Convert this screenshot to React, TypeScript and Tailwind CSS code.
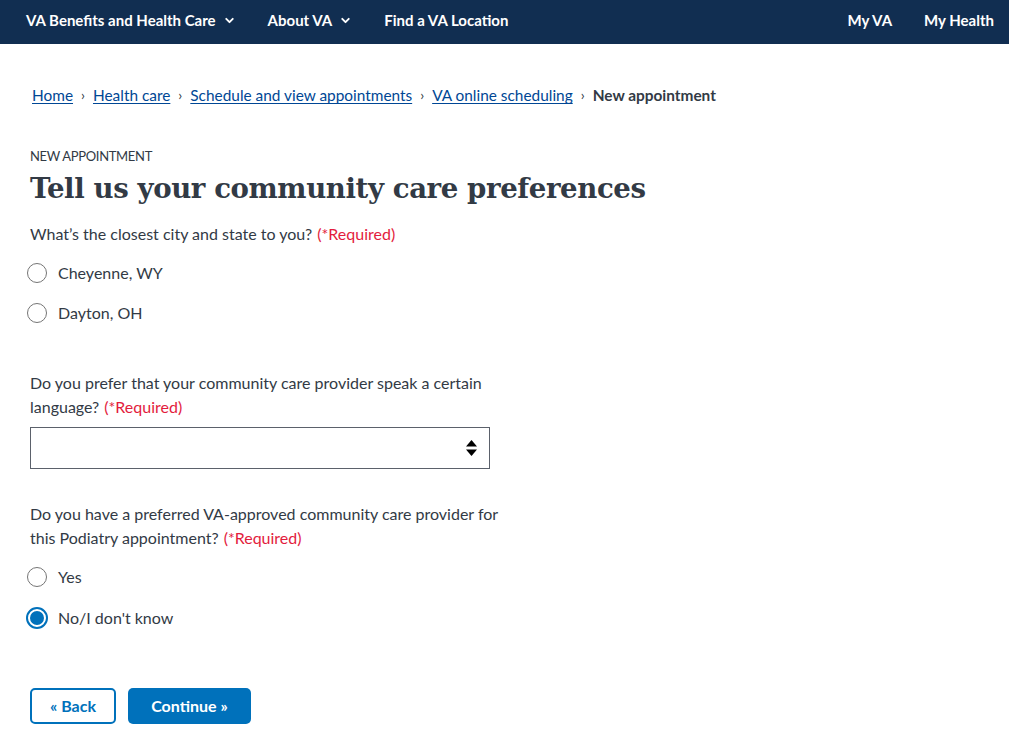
import { ChevronDown } from "lucide-react";

const body = "font-['Lato','Open_Sans',sans-serif]";

function Radio({ label, checked }: { label: string; checked?: boolean }) {
  return (
    <label className="flex items-center h-[40px] gap-[10px] cursor-pointer">
      {checked ? (
        <span className="ml-[-4px] w-[22px] h-[22px] rounded-full border-[2px] border-[#0071bb] bg-white flex items-center justify-center">
          <span className="w-[14px] h-[14px] rounded-full bg-[#0071bb]" />
        </span>
      ) : (
        <span className="ml-[-3px] w-[20px] h-[20px] rounded-full border border-[#757575] bg-white" />
      )}
      <span className={checked ? "text-[16px] text-[#323a45]" : "ml-[1px] text-[16px] text-[#323a45]"}>{label}</span>
    </label>
  );
}

function Req() {
  return <span className="text-[#e31c3d] ml-[5px]">(*Required)</span>;
}

export default function App() {
  const crumbs = ["Home", "Health care", "Schedule and view appointments", "VA online scheduling"];
  return (
    <div className={`min-h-screen bg-white ${body} text-[#323a45]`}>
      <nav className="h-[44px] pb-[4px] bg-[#112e51] flex items-center justify-between px-[26px] text-white font-bold text-[15px]">
        <div className="flex items-center">
          <span className="flex items-center gap-[7px]">
            VA Benefits and Health Care <ChevronDown size={13} strokeWidth={3.5} />
          </span>
          <span className="flex items-center gap-[7px] ml-[32px]">
            About VA <ChevronDown size={13} strokeWidth={3.5} />
          </span>
          <span className="ml-[32px]">Find a VA Location</span>
        </div>
        <div className="flex items-center gap-[32px] mr-[-11px]">
          <span>My VA</span>
          <span>My Health</span>
        </div>
      </nav>

      <div className="px-[30px]">
        <div className="flex items-center mt-[42px] ml-[2px] text-[15.4px] h-[20px]">
          {crumbs.map((c) => (
            <span key={c} className="flex items-center">
              <a href="#" className="text-[#004795] underline underline-offset-2">{c}</a>
              <span className="mx-[8px] mb-[2px] text-[#323a45] text-[14px] leading-none">›</span>
            </span>
          ))}
          <span className="font-bold">New appointment</span>
        </div>

        <div className="mt-[41px] text-[13px] uppercase tracking-tight">New appointment</div>
        <h1 className="mt-[2px] text-[27.6px] leading-[40px] font-bold font-['DejaVu_Serif',serif] tracking-[-0.4px]">
          Tell us your community care preferences
        </h1>

        <div className="mt-[13px] text-[16px]">
          What’s the closest city and state to you?<Req />
        </div>
        <div className="mt-[7px]">
          <Radio label="Cheyenne, WY" />
          <Radio label="Dayton, OH" />
        </div>

        <div className="mt-[38px] w-[480px] text-[16px] leading-[24px]">
          Do you prefer that your community care provider speak a certain language?<Req />
        </div>
        <div className="mt-[8px] w-[460px] h-[42px] border border-[#5b616b] flex items-center justify-end pr-[12px]">
          <svg width="11" height="16" viewBox="0 0 11 16">
            <path d="M5.5 0L11 6.5H0z" fill="#000" />
            <path d="M5.5 16L11 9.5H0z" fill="#000" />
          </svg>
        </div>

        <div className="mt-[33px] w-[480px] text-[16px] leading-[24px]">
          Do you have a preferred VA-approved community care provider for this Podiatry appointment?<Req />
        </div>
        <div className="mt-[7px]">
          <Radio label="Yes" />
          <div className="mt-[1px]">
            <Radio label="No/I don't know" checked />
          </div>
        </div>

        <div className="mt-[50px] flex gap-[12px]">
          <button className="h-[36px] w-[86px] rounded-[5px] border-[2px] border-[#0071bb] text-[#0071bb] font-bold text-[16px] bg-white">
            « Back
          </button>
          <button className="h-[36px] w-[123px] rounded-[5px] bg-[#0071bb] text-white font-bold text-[16px]">
            Continue »
          </button>
        </div>
      </div>
    </div>
  );
}
